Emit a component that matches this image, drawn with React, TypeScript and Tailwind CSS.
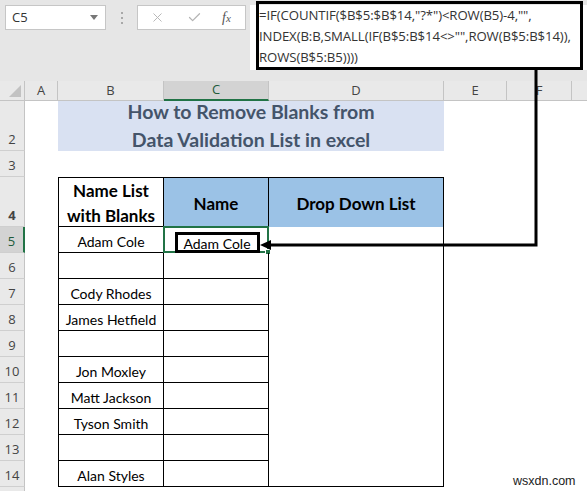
import React from 'react';
import { X, Check } from 'lucide-react';

const names = [
  'Adam Cole',
  '',
  'Cody Rhodes',
  'James Hetfield',
  '',
  'Jon Moxley',
  'Matt Jackson',
  'Tyson Smith',
  '',
  'Alan Styles',
];

const formula = [
  '=IF(COUNTIF($B$5:$B$14,"?*")<ROW(B5)-4,"",',
  'INDEX(B:B,SMALL(IF(B$5:B$14<>"",ROW(B$5:B$14)),',
  'ROWS(B$5:B5))))',
];

const Toolbar = () => (
  <div className="flex h-[81px] items-start pl-[5px] pt-[5px] font-['Open_Sans',sans-serif]">
    <div className="flex h-[25px] w-[101px] shrink-0 items-center justify-between border border-[#c6c6c6] bg-white pl-[6px] pr-[7px]">
      <span className="text-[13px] text-[#333]">C5</span>
      <svg width="8" height="5" viewBox="0 0 8 5">
        <path d="M0 0h8L4 5z" fill="#777" />
      </svg>
    </div>
    <div className="flex h-[25px] w-[31px] shrink-0 flex-col items-center justify-center gap-[3px]">
      <span className="h-[2px] w-[2px] bg-[#a8a8a8]" />
      <span className="h-[2px] w-[2px] bg-[#a8a8a8]" />
      <span className="h-[2px] w-[2px] bg-[#a8a8a8]" />
    </div>
    <div className="flex h-[25px] w-[109px] shrink-0 items-center border border-[#c6c6c6] bg-white">
      <X size={15} strokeWidth={1.5} className="ml-[12px] text-[#b4b4b4]" />
      <Check size={15} strokeWidth={2} className="ml-[22px] text-[#b4b4b4]" />
      <span className="ml-[20px] font-['Liberation_Serif',serif] text-[14px] italic text-[#555]">
        f<span className="text-[11px]">x</span>
      </span>
    </div>
    <div className="ml-[4px] h-[65px] flex-1 bg-white pl-[9px] font-['Open_Sans',sans-serif] text-[13.2px] leading-[22px] tracking-[-0.1px] text-[#333]">
      {formula.map((line) => (
        <div key={line} className="-mt-px whitespace-nowrap">
          {line}
        </div>
      ))}
    </div>
  </div>
);

const colHeads = [
  { label: 'A', w: 'w-[33px]' },
  { label: 'B', w: 'w-[106px]' },
  { label: 'C', w: 'w-[105px]', active: true },
  { label: 'D', w: 'w-[175px]' },
  { label: 'E', w: 'w-[63px]' },
  { label: 'F', w: 'w-[65px]' },
  { label: 'G', w: 'w-[60px]' },
];

const ColumnHeader = () => (
  <div className="flex h-[20px] font-['Open_Sans',sans-serif] text-[13px] text-[#444]">
    <div className="relative w-[25px] shrink-0 border-b border-r border-[#c4c4c4] bg-[#e9e9e9]">
      <svg className="absolute bottom-[3px] right-[3px]" width="12" height="12" viewBox="0 0 12 12">
        <path d="M12 0v12H0z" fill="#c2c2c2" />
      </svg>
    </div>
    {colHeads.map((c) => (
      <div
        key={c.label}
        className={`flex shrink-0 items-center justify-center border-r ${c.w} ${
          c.active
            ? 'border-b-2 border-r-[#c4c4c4] border-b-[#217346] bg-[#d3d3d3] text-[#215a3a]'
            : 'border-b border-[#c4c4c4] bg-[#e9e9e9]'
        }`}
      >
        {c.label}
      </div>
    ))}
  </div>
);

const RowHead = ({ n, active }: { n: number; active?: boolean }) => (
  <div
    className={`flex w-[25px] shrink-0 items-end justify-center border-b border-[#cfcfcf] pb-[2px] font-['Open_Sans',sans-serif] text-[13px] leading-[18px] ${
      active
        ? 'border-r-2 border-r-[#217346] bg-[#d3d3d3] text-[#215a3a]'
        : 'border-r border-r-[#c4c4c4] bg-[#e9e9e9] text-[#444]'
    }`}
  >
    {n}
  </div>
);

const Sheet = () => (
  <div className="font-['Lato',sans-serif] text-black">
    <ColumnHeader />

    {/* row 2: title band across B:D */}
    <div className="flex h-[50px] bg-white">
      <RowHead n={2} />
      <div className="w-[33px] shrink-0" />
      <div className="flex w-[386px] shrink-0 flex-col items-center justify-center bg-[#d9e1f2] text-[19.5px] font-bold leading-[28px] text-[#44546a]">
        <div>How to Remove Blanks from</div>
        <div>Data Validation List in excel</div>
      </div>
      <div className="flex-1" />
    </div>

    {/* row 3 */}
    <div className="flex h-[26px] bg-white">
      <RowHead n={3} />
    </div>

    {/* row 4: table headers */}
    <div className="flex h-[50px] bg-white text-[17px] font-bold">
      <RowHead n={4} />
      <div className="w-[33px] shrink-0" />
      <div className="flex w-[106px] shrink-0 flex-col items-center justify-center border border-black pt-[2px] leading-[25px]">
        <div>Name List</div>
        <div>with Blanks</div>
      </div>
      <div className="flex w-[105px] shrink-0 items-center justify-center border-r border-t border-black bg-[#9bc2e6] pt-[2px]">
        Name
      </div>
      <div className="flex w-[175px] shrink-0 items-center justify-center border-r border-t border-black bg-[#9bc2e6] pt-[2px]">
        Drop Down List
      </div>
    </div>

    {/* rows 5-14 */}
    {names.map((name, i) => {
      const row = i + 5;
      const last = row === 14;
      return (
        <div key={row} className="flex h-[26px] bg-white text-[14px]">
          <RowHead n={row} active={row === 5} />
          <div className="w-[33px] shrink-0" />
          <div className="flex w-[106px] shrink-0 items-center justify-center border-x border-b border-black pt-[3px]">
            {name}
          </div>
          <div className="relative flex w-[105px] shrink-0 items-start justify-center border-b border-r border-black">
            {row === 5 && (
              <>
                <div className="absolute -left-px -top-px bottom-[-1px] right-[-1px] border-2 border-[#217346]">
                  <span className="absolute -bottom-[4px] -right-[4px] h-[6px] w-[6px] border border-white bg-[#217346]" />
                </div>
                <div className="relative z-10 ml-[2px] mt-[5px] flex h-[21px] w-[85px] items-center justify-center border-[3px] border-black bg-white pt-[1px]">
                  Adam Cole
                </div>
              </>
            )}
          </div>
          <div className={`w-[175px] shrink-0 border-r border-black ${last ? 'border-b' : ''}`} />
        </div>
      );
    })}

    {/* row 15 */}
    <div className="flex h-[26px] bg-white">
      <RowHead n={15} />
    </div>
  </div>
);

// callout frame around the formula and the arrow down to C5
const Callouts = () => (
  <>
    <div className="pointer-events-none absolute left-[256px] top-[1px] h-[69px] w-[327px] border-[3px] border-black" />
    <svg className="pointer-events-none absolute left-0 top-0" width="587" height="491">
      <path d="M536 69V245H268" fill="none" stroke="#000" strokeWidth="3" />
      <path d="M260 245l11-5v10z" fill="#000" />
    </svg>
  </>
);

export default function App() {
  return (
    <div className="relative h-[491px] w-[587px] overflow-hidden bg-[#e6e6e6]">
      <Toolbar />
      <Sheet />
      <Callouts />
      <span className="absolute left-[513px] top-[472px] font-['Liberation_Sans',sans-serif] text-[12.5px] text-[#222]">
        wsxdn.com
      </span>
    </div>
  );
}
